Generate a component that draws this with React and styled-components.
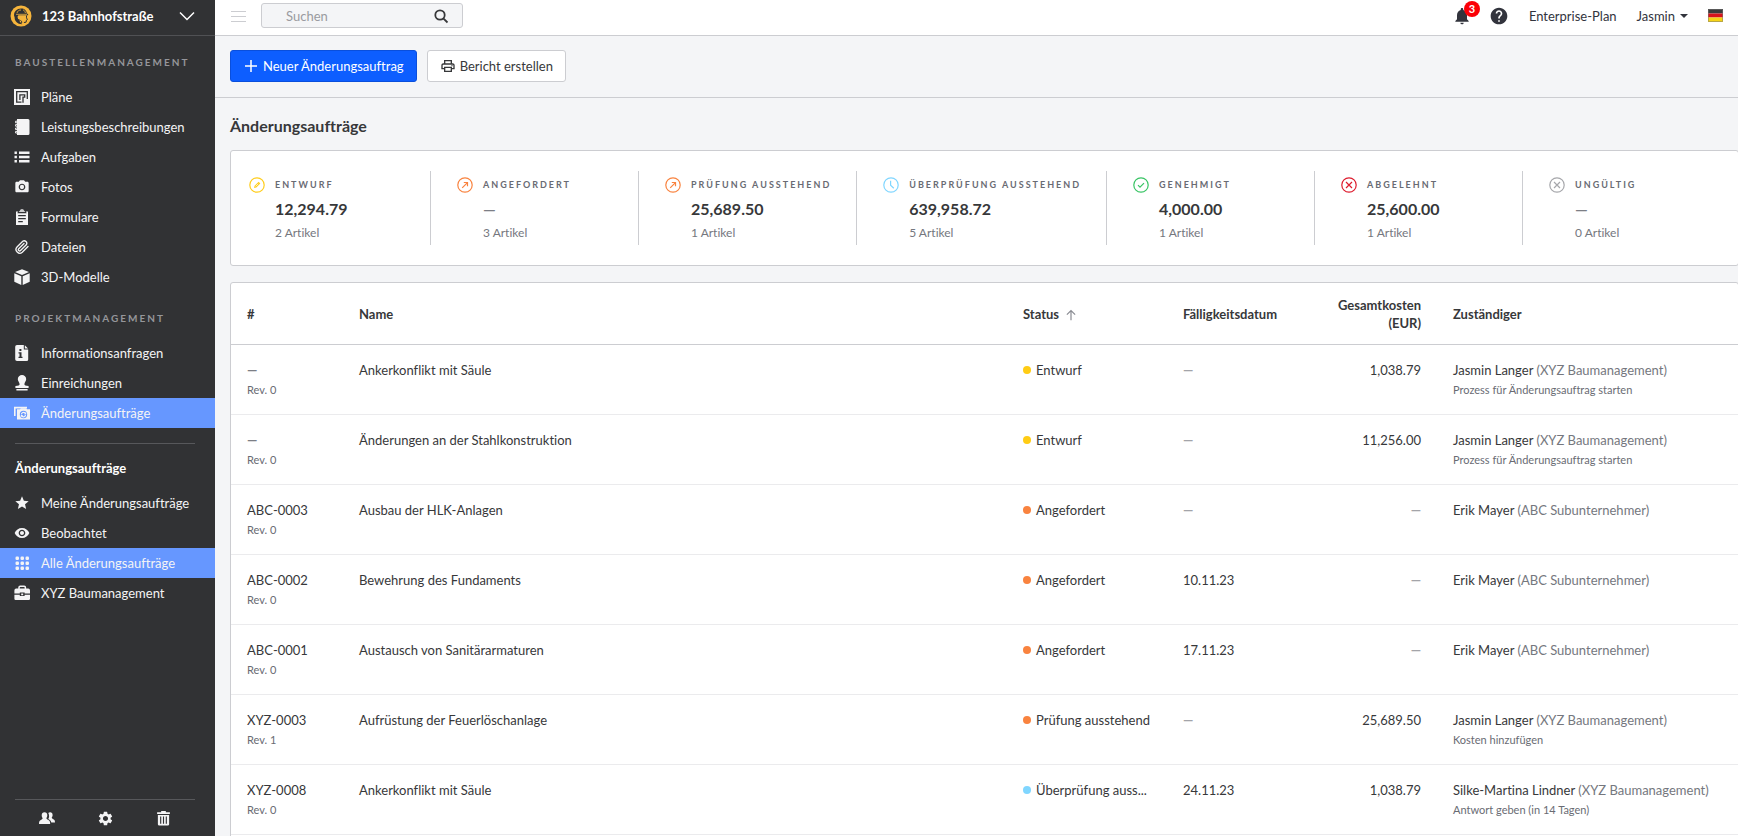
import styled, { createGlobalStyle } from "styled-components";
import {
  MdCameraAlt,
  MdHelp,
  MdNotifications,
  MdOutlineLocalPrintshop,
  MdSettings,
  MdStar,
  MdVisibility,
} from "react-icons/md";

const GlobalStyle = createGlobalStyle`
  * {
    box-sizing: border-box;
  }
  body {
    margin: 0;
    background: #f4f5f7;
    color: #37383a;
    font-family: Lato, "Liberation Sans", sans-serif;
    font-size: 13px;
    font-variant-ligatures: none;
    line-height: 20px;
  }
  button, input {
    font: inherit;
    color: inherit;
  }
  a {
    color: inherit;
    text-decoration: none;
  }
  h1, h2, p, ul {
    margin: 0;
    padding: 0;
  }
`;

const Layout = styled.div`
  display: flex;
  height: 100vh;
  overflow: hidden;
`;

const Sidebar = styled.aside`
  display: flex;
  flex-direction: column;
  flex: 0 0 215px;
  min-width: 0;
  background: #313234;
  color: #f4f4f5;
`;

const ProjectButton = styled.button`
  display: flex;
  align-items: center;
  gap: 10px;
  height: 36px;
  padding: 0 20px 4px 10px;
  border: 0;
  border-bottom: 1px solid #505154;
  background: none;
  color: #fff;
  font-weight: 700;
  text-align: left;
  span {
    flex: 1;
  }
`;

const SectionTitle = styled.h2`
  padding: 16px 15px 10px;
  color: #95969a;
  font-size: 10px;
  font-weight: 700;
  letter-spacing: 2px;
`;

const SubTitle = styled.h2`
  padding: 14px 15px 10px;
  color: #fff;
  font-size: 13px;
  font-weight: 700;
`;

const NavLink = styled.a`
  display: flex;
  align-items: center;
  gap: 11px;
  height: 30px;
  padding: 0 14px;
  background: ${(props) => (props.$active ? "#6697ff" : "none")};
  svg {
    flex: none;
    width: 16px;
    height: 16px;
  }
`;

const Nav = styled.nav`
  flex: 1;
`;

const Divider = styled.hr`
  margin: 15px 20px 0 15px;
  border: 0;
  border-top: 1px solid #57585b;
`;

const SidebarFooter = styled.div`
  display: flex;
  justify-content: space-between;
  margin: 0 20px 0 15px;
  padding: 8px 24px;
  height: 37px;
  border-top: 1px solid #57585b;
`;

const IconButton = styled.button`
  display: flex;
  align-items: center;
  justify-content: center;
  padding: 0;
  border: 0;
  background: none;
  color: inherit;
  position: relative;
`;

const Main = styled.main`
  flex: 1;
  min-width: 0;
`;

const TopBar = styled.header`
  display: flex;
  align-items: center;
  height: 36px;
  padding: 0 15px 4px 16px;
  border-bottom: 1px solid #cccdd1;
  background: #fff;
`;

const SearchBox = styled.label`
  display: flex;
  align-items: center;
  width: 202px;
  height: 25px;
  margin: 0 auto 0 14px;
  padding: 0 13px 0 24px;
  border: 1px solid #cccdd1;
  border-radius: 3px;
  background: #f4f5f7;
  input {
    flex: 1;
    min-width: 0;
    padding: 0;
    border: 0;
    outline: 0;
    background: none;
  }
  input::placeholder {
    color: #9a9ba0;
    opacity: 1;
  }
`;

const TopActions = styled.div`
  display: flex;
  align-items: center;
  gap: 20px;
  color: #32343d;
`;

const IconGroup = styled.div`
  display: flex;
  gap: 17px;
`;

const Badge = styled.span`
  position: absolute;
  top: -5px;
  right: -8px;
  width: 16px;
  height: 16px;
  border-radius: 8px;
  background: #fb0007;
  color: #fff;
  font-size: 11px;
  font-weight: 700;
  line-height: 16px;
  text-align: center;
`;

const UserButton = styled(IconButton)`
  gap: 5px;
`;

const Toolbar = styled.div`
  display: flex;
  gap: 10px;
  padding: 14px 15px 15px;
  border-bottom: 1px solid #cccdd1;
`;

const Button = styled.button`
  display: flex;
  align-items: center;
  gap: 4px;
  height: 32px;
  padding: 0 12px;
  border: 1px solid ${(props) => (props.$primary ? "#0a4fdc" : "#cccdd1")};
  border-radius: 3px;
  background: ${(props) => (props.$primary ? "#0d5eff" : "#fff")};
  color: ${(props) => (props.$primary ? "#fff" : "#37383a")};
`;

const Content = styled.div`
  padding: 18px 0 0 15px;
`;

const Title = styled.h1`
  margin-bottom: 14px;
  font-size: 16px;
  font-weight: 700;
`;

// cards run one pixel past the right side of the page
const Card = styled.section`
  margin-right: -1px;
  border: 1px solid #cccdd1;
  border-radius: 3px;
  background: #fff;
`;

const SummaryCard = styled(Card)`
  margin-bottom: 16px;
  padding: 20px 8px 20px 0;
`;

const Stats = styled.ul`
  display: flex;
  margin-left: -8px;
  list-style: none;
`;

const Stat = styled.li`
  display: flex;
  flex: 1 1 0;
  gap: 10px;
  height: 74px;
  padding: 4px 25px 0 26px;
  white-space: nowrap;
  & + & {
    border-left: 1px solid #cccdd1;
  }
  svg {
    flex: none;
    margin-top: 2px;
  }
`;

const StatLabel = styled.p`
  color: #696b73;
  font-size: 9px;
  font-weight: 700;
  letter-spacing: 2px;
`;

const StatValue = styled.p`
  margin: 4px 0;
  font-size: 16px;
  font-weight: 700;
`;

const StatCount = styled.p`
  color: #75777e;
  font-size: 12px;
`;

const TableCard = styled(Card)`
  height: 100vh;
`;

const Table = styled.table`
  width: 100%;
  border-collapse: separate;
  border-spacing: 0;
  table-layout: fixed;
`;

const Th = styled.th`
  width: ${(props) => props.$width};
  height: 62px;
  padding: 0 16px;
  border-bottom: 1px solid #cccdd1;
  font-weight: 700;
  line-height: 18px;
  text-align: ${(props) => props.$align || "left"};
  svg {
    margin-left: 6px;
    vertical-align: -2px;
  }
`;

const Td = styled.td`
  height: 70px;
  padding: 15px 16px 14px;
  border-bottom: 1px solid #ebebed;
  text-align: ${(props) => props.$align || "left"};
  vertical-align: top;
  white-space: nowrap;
`;

const Muted = styled.span`
  color: #75777e;
`;

const Dash = styled.span`
  color: ${(props) => (props.$dark ? "#7c7e85" : "#a3a4a9")};
  font-weight: 700;
`;

const Small = styled.div`
  color: #696b73;
  font-size: 11px;
`;

const Status = styled.div`
  display: flex;
  align-items: center;
  gap: 5px;
  &::before {
    content: "";
    flex: none;
    width: 8px;
    height: 8px;
    border-radius: 4px;
    background: ${(props) => props.$color};
  }
`;

const Icon = ({ size = 16, children, ...rest }) => (
  <svg width={size} height={size} viewBox="0 0 16 16" fill="currentColor" aria-hidden="true" {...rest}>
    {children}
  </svg>
);

const Logo = () => (
  <svg width="22" height="22" viewBox="0 0 22 22" aria-hidden="true">
    <circle cx="11" cy="11" r="10.5" fill="#f6b53c" />
    <path
      d="M4 10.500C4 6 7 3.600 11 3.400c3.400-.1 5.600 2 5.900 5l1.200.6v1.200H8.400l-.9 1.500.6 2.200 1.500.6.2 2.200 2.600 2.600-3.600-.6C6 17.600 4.400 15 4.600 12.300z"
      fill="#313234"
    />
    <path d="M7 8C7.600 6 9 5 11 5M13 4.800c1.400.6 2.200 1.700 2.400 3.200M6 9.300h11" fill="none" stroke="#f6b53c" strokeWidth=".8" />
    <path d="M16.500 10.500v2.300l.9 1.800-1 .6-.3 2-2.200.3M10.500 15.500c.8 0 1.300.8 1.200 2.500" fill="none" stroke="#313234" />
  </svg>
);

const PlanIcon = () => (
  <Icon>
    <path d="M0 0h16v16H0z" />
    <path
      d="M7.500 13.200H2.700V2.700h10.600v7.200M5.900 11V5.900h4.800v2.300H9v5.600"
      fill="none"
      stroke="#313234"
      strokeWidth="1.300"
    />
  </Icon>
);

const NotebookIcon = () => (
  <Icon>
    <path d="M3 0h11a1.5 1.5 0 0 1 1.5 1.5v13A1.5 1.5 0 0 1 14 16H3z" />
    <path d="M4 2.2H1.6v1.6H4M4 5.6H1.6v1.6H4M4 9H1.6v1.6H4M4 12.4H1.6V14H4" fill="none" stroke="currentColor" />
  </Icon>
);

const ListIcon = () => (
  <Icon>
    <path d="M.5 2.500h2.400v2.400H.5zM5 2.500h10.500v2.400H5zM.5 6.800h2.400v2.400H.5zM5 6.800h10.500v2.400H5zM.5 11.100h2.400v2.400H.5zM5 11.100h10.500v2.400H5z" />
  </Icon>
);

const ClipboardIcon = () => (
  <Icon>
    <path d="M8 0a2.300 2.300 0 0 1 2.200 1.700l1.300 1.300h-7l1.300-1.300A2.300 2.300 0 0 1 8 0z" opacity=".8" />
    <path
      fillRule="evenodd"
      d="M2 2.600h2l-.6 1.600h9.200L12 2.600h2V16H2zM4.200 6v1.200h7.600V6zm0 3v1.200h7.600V9zm0 3v1.200h4.600V12z"
    />
  </Icon>
);

const ClipIcon = () => (
  <Icon viewBox="0 0 24 24" fill="none" stroke="currentColor" strokeWidth="2" strokeLinecap="round">
    <path d="m21 11.3-8.6 8.6a5.6 5.6 0 0 1-7.9-7.9l8.6-8.6a3.8 3.8 0 0 1 5.3 5.3l-8.6 8.6a1.9 1.9 0 0 1-2.7-2.7l7.9-7.9" />
  </Icon>
);

const CubeIcon = () => (
  <Icon>
    <path d="m8 .2 7 2.7-7 3-7-3zM.3 4.2l7 3V16l-7-3.3zM15.7 4.2l-7 3V16l7-3.3z" />
  </Icon>
);

const InfoFileIcon = () => (
  <Icon>
    <path
      fillRule="evenodd"
      d="M3 0h6.8v4.6h4.4V14A1.8 1.8 0 0 1 12.4 16H3a1.8 1.8 0 0 1-1.8-1.8V1.8A1.8 1.8 0 0 1 3 0zm2.4 4v2h2V4zM4.500 7.300v1.300h1v3.200h-1v1.300h4v-1.300h-1V7.300z"
    />
    <path d="m10.8.2 3.3 3.4h-3.3z" />
  </Icon>
);

const StampIcon = () => (
  <Icon>
    <path d="M8 0a4.2 4.2 0 0 1 4.2 4.2c0 2-1.8 3-1.8 5.1 0 1 1.3 1.5 4.2 1.8v1.8H1.4v-1.8c2.9-.3 4.2-.8 4.2-1.8 0-2.1-1.8-3.1-1.8-5.1A4.2 4.2 0 0 1 8 0zM2.4 14h11.2v1.6H2.4z" />
  </Icon>
);

const ChangeIcon = () => (
  <Icon>
    <path d="M0 1.800h13v1.600H1.600V11H0z" />
    <path
      fillRule="evenodd"
      d="M3 4.200h3l1-1h5l1 1h3v10.300H3zm6.500 1.600a3.700 3.700 0 1 0 0 7.400 3.700 3.700 0 0 0 0-7.400z"
    />
    <path d="M7.400 9.400a2.200 2.200 0 0 1 3.700-1.500M11.600 9.800a2.200 2.200 0 0 1-3.700 1.500" fill="none" stroke="currentColor" strokeWidth="1.200" />
    <path d="M12.200 6.800v2.400H9.800zM6.800 12.400V10h2.400z" />
  </Icon>
);

const GridIcon = () => (
  <Icon>
    {[1.5, 6.5, 11.5].map((y) =>
      [1.5, 6.5, 11.5].map((x) => <rect key={x + "-" + y} x={x} y={y} width="3.5" height="3.5" rx="1.2" />)
    )}
  </Icon>
);

const BriefcaseIcon = () => (
  <Icon>
    <path d="M5 4V2.500A1.200 1.200 0 0 1 6.200 1.300h4A1.200 1.200 0 0 1 11.400 2.500V4" fill="none" stroke="currentColor" strokeWidth="1.500" />
    <path
      fillRule="evenodd"
      d="M2.200 3.600h12a1.800 1.800 0 0 1 1.800 1.800v3.200h-5.400V7.400H5.800v1.200H.4V5.400a1.800 1.800 0 0 1 1.800-1.800z"
    />
    <path d="M.4 9.800h5.400V11h4.800V9.800H16v4a1.200 1.200 0 0 1-1.200 1.200H1.600a1.200 1.200 0 0 1-1.200-1.200zM7.200 8.400h2v1.800h-2z" />
  </Icon>
);

const PeopleIcon = () => (
  <Icon>
    <path d="M5.5 2.2c1.8 0 2.8 1.2 2.8 3 0 1.4-.6 2.3-1 2.9.1 1 .8 1.2 2 1.8 1.3.6 1.9 1.3 1.9 4.1H0c0-2.8.6-3.5 1.9-4.1 1.2-.6 1.7-.8 1.8-1.8-.5-.6-1-1.5-1-2.9 0-1.8 1-3 2.8-3z" />
    <path d="M9.3 3c.4-.5 1-.8 1.8-.8 1.6 0 2.5 1.1 2.5 2.7 0 1.3-.5 2.1-.9 2.6.1 1 .7 1.2 1.6 1.7 1.2.6 1.7 1.2 1.7 3.4h-3.7c-.3-1.9-1.1-2.8-3-3.7.9-1.3 1.3-3.6 0-5.9z" />
  </Icon>
);

const TrashIcon = () => (
  <Icon size={15}>
    <path
      fillRule="evenodd"
      d="M5.5 0h5v1.2h4.3v2H1.200v-2h4.300zM2 4.200h12V14a1.500 1.500 0 0 1-1.500 1.500h-9A1.500 1.500 0 0 1 2 14zm2.400 1.600v7.700h1.200V5.800zm3 0v7.700h1.200V5.800zm3 0v7.700h1.200V5.800z"
    />
  </Icon>
);

const glyphs = {
  pencil: (
    <>
      <path d="m5 11 .6-2.300 4-4 1.700 1.700-4 4z" fill="currentColor" stroke="none" />
      <path d="m6.600 9.400 2.600-2.600" stroke="#fff" strokeWidth=".7" />
    </>
  ),
  arrow: <path d="m5.200 10.800 5-5M6.800 5.500h3.700v3.700" />,
  clock: <path d="M7.600 3.800v4.400l3.200 3" />,
  check: <path d="m5 8.200 2 2 4-4" />,
  cross: <path d="m5 5 6 6M11 5l-6 6" />,
};

const StatIcon = ({ glyph, color }) => (
  <Icon fill="none" stroke={color} color={color} strokeWidth="1.2">
    <circle cx="8" cy="8" r="7.2" />
    {glyphs[glyph]}
  </Icon>
);

const Flag = () => (
  <svg width="15" height="13" viewBox="0 0 15 13" aria-hidden="true">
    <path fill="#3b3b3b" d="M0 0h15v4.500H0z" />
    <path fill="#d8141c" d="M0 4.500h15v4H0z" />
    <path fill="#f7d417" d="M0 8.500h15V13H0z" />
    <path fill="none" stroke="#777" strokeOpacity=".5" d="M.5.5h14v12H.5z" />
  </svg>
);

const siteLinks = [
  { label: "Pläne", icon: <PlanIcon /> },
  { label: "Leistungsbeschreibungen", icon: <NotebookIcon /> },
  { label: "Aufgaben", icon: <ListIcon /> },
  { label: "Fotos", icon: <MdCameraAlt /> },
  { label: "Formulare", icon: <ClipboardIcon /> },
  { label: "Dateien", icon: <ClipIcon /> },
  { label: "3D-Modelle", icon: <CubeIcon /> },
];

const projectLinks = [
  { label: "Informationsanfragen", icon: <InfoFileIcon /> },
  { label: "Einreichungen", icon: <StampIcon /> },
  { label: "Änderungsaufträge", icon: <ChangeIcon />, active: true },
];

const filterLinks = [
  { label: "Meine Änderungsaufträge", icon: <MdStar /> },
  { label: "Beobachtet", icon: <MdVisibility /> },
  { label: "Alle Änderungsaufträge", icon: <GridIcon />, active: true },
  { label: "XYZ Baumanagement", icon: <BriefcaseIcon /> },
];

const stats = [
  { label: "ENTWURF", value: "12,294.79", count: 2, glyph: "pencil", color: "#ffcd1c" },
  { label: "ANGEFORDERT", count: 3, glyph: "arrow", color: "#f9833f" },
  { label: "PRÜFUNG AUSSTEHEND", value: "25,689.50", count: 1, glyph: "arrow", color: "#f9833f" },
  { label: "ÜBERPRÜFUNG AUSSTEHEND", value: "639,958.72", count: 5, glyph: "clock", color: "#80d6ff" },
  { label: "GENEHMIGT", value: "4,000.00", count: 1, glyph: "check", color: "#38c464" },
  { label: "ABGELEHNT", value: "25,600.00", count: 1, glyph: "cross", color: "#dd1c2e" },
  { label: "UNGÜLTIG", count: 0, glyph: "cross", color: "#a6a7ab" },
];

const statuses = {
  draft: { label: "Entwurf", color: "#ffcc14" },
  requested: { label: "Angefordert", color: "#f9833f" },
  pending: { label: "Prüfung ausstehend", color: "#f9833f" },
  review: { label: "Überprüfung auss...", color: "#80d6ff" },
};

const orders = [
  { rev: 0, name: "Ankerkonflikt mit Säule", status: "draft", cost: "1,038.79", person: "Jasmin Langer", company: "XYZ Baumanagement", step: "Prozess für Änderungsauftrag starten" },
  { rev: 0, name: "Änderungen an der Stahlkonstruktion", status: "draft", cost: "11,256.00", person: "Jasmin Langer", company: "XYZ Baumanagement", step: "Prozess für Änderungsauftrag starten" },
  { id: "ABC-0003", rev: 0, name: "Ausbau der HLK-Anlagen", status: "requested", person: "Erik Mayer", company: "ABC Subunternehmer" },
  { id: "ABC-0002", rev: 0, name: "Bewehrung des Fundaments", status: "requested", due: "10.11.23", person: "Erik Mayer", company: "ABC Subunternehmer" },
  { id: "ABC-0001", rev: 0, name: "Austausch von Sanitärarmaturen", status: "requested", due: "17.11.23", person: "Erik Mayer", company: "ABC Subunternehmer" },
  { id: "XYZ-0003", rev: 1, name: "Aufrüstung der Feuerlöschanlage", status: "pending", cost: "25,689.50", person: "Jasmin Langer", company: "XYZ Baumanagement", step: "Kosten hinzufügen" },
  { id: "XYZ-0008", rev: 0, name: "Ankerkonflikt mit Säule", status: "review", due: "24.11.23", cost: "1,038.79", person: "Silke-Martina Lindner", company: "XYZ Baumanagement", step: "Antwort geben (in 14 Tagen)" },
];

const NavList = ({ links }) =>
  links.map((link) => (
    <NavLink href="#" key={link.label} $active={link.active}>
      {link.icon}
      {link.label}
    </NavLink>
  ));

const OrderRow = ({ order }) => (
  <tr>
    <Td>
      {order.id || <Dash $dark>—</Dash>}
      <Small>Rev. {order.rev}</Small>
    </Td>
    <Td>{order.name}</Td>
    <Td>
      <Status $color={statuses[order.status].color}>{statuses[order.status].label}</Status>
    </Td>
    <Td>{order.due || <Dash>—</Dash>}</Td>
    <Td $align="right">{order.cost || <Dash>—</Dash>}</Td>
    <Td>
      {order.person} <Muted>({order.company})</Muted>
      <Small>{order.step}</Small>
    </Td>
  </tr>
);

const App = () => {
  return (
    <Layout>
      <GlobalStyle />
      <Sidebar>
        <ProjectButton>
          <Logo />
          <span>123 Bahnhofstraße</span>
          <Icon fill="none" stroke="currentColor" strokeWidth="1.5">
            <path d="m1 4.500 7 7 7-7" />
          </Icon>
        </ProjectButton>
        <Nav>
          <SectionTitle>BAUSTELLENMANAGEMENT</SectionTitle>
          <NavList links={siteLinks} />
          <SectionTitle>PROJEKTMANAGEMENT</SectionTitle>
          <NavList links={projectLinks} />
          <Divider />
          <SubTitle>Änderungsaufträge</SubTitle>
          <NavList links={filterLinks} />
        </Nav>
        <SidebarFooter>
          <IconButton aria-label="Personen">
            <PeopleIcon />
          </IconButton>
          <IconButton aria-label="Einstellungen">
            <MdSettings size={17} />
          </IconButton>
          <IconButton aria-label="Papierkorb">
            <TrashIcon />
          </IconButton>
        </SidebarFooter>
      </Sidebar>
      <Main>
        <TopBar>
          <IconButton aria-label="Menü">
            <Icon fill="none" stroke="#cccdd1">
              <path d="M0 3.500h15M0 8.500h15M0 13.500h15" />
            </Icon>
          </IconButton>
          <SearchBox>
            <input type="text" placeholder="Suchen" aria-label="Suchen" />
            <Icon fill="none" stroke="currentColor" strokeWidth="1.8">
              <circle cx="7" cy="7" r="4.7" />
              <path d="m10.300 10.300 4.200 4.200" />
            </Icon>
          </SearchBox>
          <TopActions>
            <IconGroup>
              <IconButton aria-label="Mitteilungen">
                <MdNotifications size={20} />
                <Badge>3</Badge>
              </IconButton>
              <IconButton aria-label="Hilfe">
                <MdHelp size={20} />
              </IconButton>
            </IconGroup>
            <a href="#">Enterprise-Plan</a>
            <UserButton>
              Jasmin
              <svg width="8" height="4" viewBox="0 0 8 4" fill="currentColor" aria-hidden="true">
                <path d="M0 0h8L4 4z" />
              </svg>
            </UserButton>
            <IconButton aria-label="Sprache">
              <Flag />
            </IconButton>
          </TopActions>
        </TopBar>
        <Toolbar>
          <Button $primary>
            <Icon fill="none" stroke="currentColor" strokeWidth="1.5">
              <path d="M8 2v12M2 8h12" />
            </Icon>
            Neuer Änderungsauftrag
          </Button>
          <Button>
            <MdOutlineLocalPrintshop size={16} />
            Bericht erstellen
          </Button>
        </Toolbar>
        <Content>
          <Title>Änderungsaufträge</Title>
          <SummaryCard>
            <Stats>
              {stats.map((stat) => (
                <Stat key={stat.label}>
                  <StatIcon glyph={stat.glyph} color={stat.color} />
                  <div>
                    <StatLabel>{stat.label}</StatLabel>
                    <StatValue>{stat.value || <Dash $dark>—</Dash>}</StatValue>
                    <StatCount>{stat.count} Artikel</StatCount>
                  </div>
                </Stat>
              ))}
            </Stats>
          </SummaryCard>
          <TableCard>
            <Table>
              <thead>
                <tr>
                  <Th $width="112px">#</Th>
                  <Th>Name</Th>
                  <Th $width="160px">
                    Status
                    <Icon size={12} fill="none" stroke="#8a8c93" strokeWidth="1.6">
                      <path d="M8 15V2M2.500 7.500 8 2l5.500 5.500" />
                    </Icon>
                  </Th>
                  <Th $width="150px">Fälligkeitsdatum</Th>
                  <Th $width="120px" $align="right">
                    Gesamtkosten (EUR)
                  </Th>
                  <Th $width="301px">Zuständiger</Th>
                </tr>
              </thead>
              <tbody>
                {orders.map((order, index) => (
                  <OrderRow key={index} order={order} />
                ))}
              </tbody>
            </Table>
          </TableCard>
        </Content>
      </Main>
    </Layout>
  );
};

export default App;
